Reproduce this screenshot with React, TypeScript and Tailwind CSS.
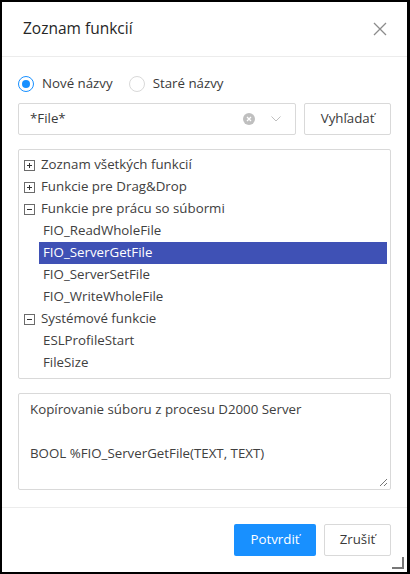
import React from "react";

const font = { fontFamily: '"Open Sans", "Noto Sans", sans-serif' };

function PlusBox({ minus }: { minus?: boolean }) {
  return (
    <svg width="11" height="11" viewBox="0 0 11 11" className="shrink-0">
      <rect x="0.5" y="0.5" width="10" height="10" fill="white" stroke="#6b6b6b" />
      <line x1="3" y1="5.5" x2="8" y2="5.5" stroke="#333" />
      {!minus && <line x1="5.5" y1="3" x2="5.5" y2="8" stroke="#333" />}
    </svg>
  );
}

function Group({ label, minus }: { label: string; minus?: boolean }) {
  return (
    <div className="flex h-[22px] items-center gap-[6px] pl-[5px]">
      <PlusBox minus={minus} />
      <span>{label}</span>
    </div>
  );
}

function Leaf({ label, selected }: { label: string; selected?: boolean }) {
  return (
    <div className="flex h-[22px] items-center pl-[20px] pr-[3px]">
      <div
        className={
          "flex h-[22px] w-full items-center pl-[4px] " +
          (selected ? "bg-[#3f51b5] text-white" : "")
        }
      >
        {label}
      </div>
    </div>
  );
}

export default function App() {
  return (
    <div className="h-[574px] w-[410px] bg-black p-[2px] pr-[3px]" style={font}>
      <div className="relative flex h-[570px] w-[405px] flex-col bg-white text-[13.3px] text-[#3a3a3a]">
        <div className="flex h-[55px] items-center justify-between border-b border-[#ececec] pl-[21px] pr-[20px]">
          <span className="text-[15.5px] font-medium text-[#262626]">Zoznam funkcií</span>
          <svg width="14" height="14" viewBox="0 0 14 14">
            <path d="M1 1L13 13M13 1L1 13" stroke="#8c8c8c" strokeWidth="1.3" />
          </svg>
        </div>

        <div className="flex flex-1 flex-col px-[16px] pt-[16px]">
          <div className="flex h-[22px] items-center">
            <label className="flex items-center gap-[8px]">
              <span className="flex h-[16px] w-[16px] items-center justify-center rounded-full border border-[#1890ff]">
                <span className="h-[8px] w-[8px] rounded-full bg-[#1890ff]" />
              </span>
              <span>Nové názvy</span>
            </label>
            <label className="ml-[16px] flex items-center gap-[8px]">
              <span className="h-[16px] w-[16px] rounded-full border border-[#d9d9d9]" />
              <span>Staré názvy</span>
            </label>
          </div>

          <div className="mt-[8px] flex gap-[8px]">
            <div className="flex h-[32px] w-[279px] items-center rounded-[2px] border border-[#d9d9d9] pl-[11px] pr-[14px]">
              <span className="flex-1">*File*</span>
              <svg width="12" height="12" viewBox="0 0 12 12" className="mr-[16px]">
                <circle cx="6" cy="6" r="6" fill="#bfbfbf" />
                <path d="M4 4L8 8M8 4L4 8" stroke="white" strokeWidth="1.3" />
              </svg>
              <svg width="10" height="6" viewBox="0 0 10 6">
                <path d="M0.5 0.5L5 5L9.5 0.5" fill="none" stroke="#bfbfbf" strokeWidth="1" />
              </svg>
            </div>
            <div className="flex h-[32px] w-[87px] items-center justify-center rounded-[2px] border border-[#d9d9d9]">
              Vyhľadať
            </div>
          </div>

          <div className="mt-[14px] h-[230px] rounded-[2px] border border-[#d9d9d9] pt-[4px] text-[#404040]">
            <Group label="Zoznam všetkých funkcií" />
            <Group label="Funkcie pre Drag&Drop" />
            <Group label="Funkcie pre prácu so súbormi" minus />
            <Leaf label="FIO_ReadWholeFile" />
            <Leaf label="FIO_ServerGetFile" selected />
            <Leaf label="FIO_ServerSetFile" />
            <Leaf label="FIO_WriteWholeFile" />
            <Group label="Systémové funkcie" minus />
            <Leaf label="ESLProfileStart" />
            <Leaf label="FileSize" />
          </div>

          <div className="relative mt-[14px] h-[97px] rounded-[2px] border border-[#d9d9d9] px-[11px] pt-[4px] leading-[22px] text-[#404040]">
            <div>Kopírovanie súboru z procesu D2000 Server</div>
            <div>&nbsp;</div>
            <div>BOOL %FIO_ServerGetFile(TEXT, TEXT)</div>
            <svg width="9" height="9" viewBox="0 0 9 9" className="absolute bottom-[2px] right-[2px]">
              <path d="M8 1L1 8M8 5L5 8" stroke="#777" strokeWidth="1" />
            </svg>
          </div>
        </div>

        <div className="flex h-[65px] items-center justify-end gap-[8px] border-t border-[#ececec] pr-[16px]">
          <div className="flex h-[32px] w-[82px] items-center justify-center rounded-[2px] bg-[#1890ff] text-white">
            Potvrdiť
          </div>
          <div className="flex h-[32px] w-[67px] items-center justify-center rounded-[2px] border border-[#d9d9d9]">
            Zrušiť
          </div>
        </div>

        <svg width="12" height="12" viewBox="0 0 12 12" className="absolute bottom-[3px] right-[3px]">
          <path d="M11 0V11H0" fill="none" stroke="#777" strokeWidth="2" />
        </svg>
      </div>
    </div>
  );
}
